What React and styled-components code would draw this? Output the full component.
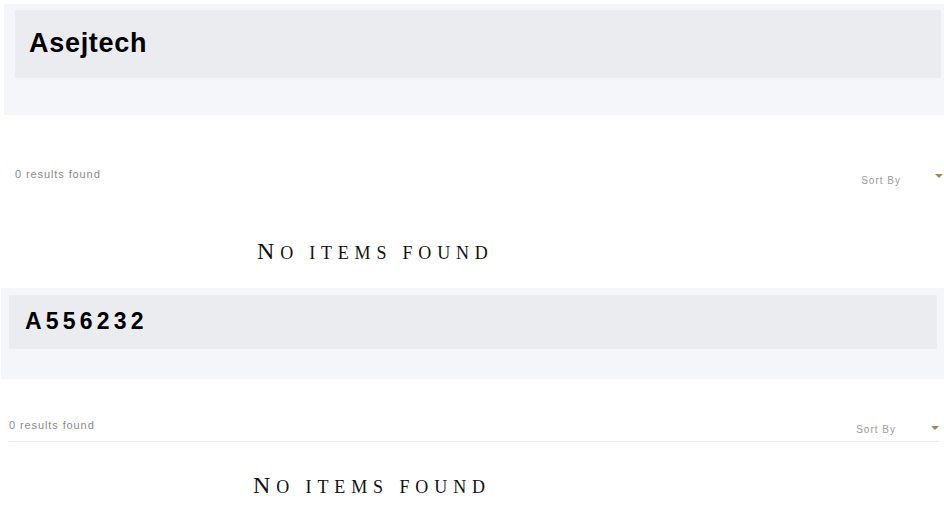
import React from "react";
import styled, { createGlobalStyle } from "styled-components";

const Global = createGlobalStyle`
  html, body { margin: 0; padding: 0; background: #ffffff; }
  body { font-family: "Liberation Sans", Arial, sans-serif; }
`;

const Page = styled.div`
  width: 944px;
  height: 524px;
  overflow: hidden;
  display: flex;
  flex-direction: column;
`;

const Section = styled.section`
  display: flex;
  flex-direction: column;
  padding-top: ${(p) => p.$top}px;
`;

const Banner = styled.div`
  margin-left: ${(p) => p.$left}px;
  background: #f5f6fa;
  height: ${(p) => p.$h}px;
  box-sizing: border-box;
  padding: ${(p) => p.$pad};
`;

const TitleBox = styled.div`
  background: #ebecf0;
  height: ${(p) => p.$h}px;
  display: flex;
  align-items: flex-start;
  padding-left: ${(p) => p.$indent}px;
  padding-top: ${(p) => p.$ptop}px;
  box-sizing: border-box;
`;

const Title = styled.h1`
  margin: 0;
  font-family: "Liberation Sans", Arial, sans-serif;
  font-weight: 700;
  font-size: ${(p) => p.$size}px;
  line-height: 1;
  letter-spacing: ${(p) => p.$ls}px;
  color: #000;
`;

const Toolbar = styled.div`
  display: flex;
  justify-content: space-between;
  margin: ${(p) => p.$margin};
  height: ${(p) => p.$h}px;
  border-bottom: 1px solid ${(p) => (p.$line ? "#ececec" : "transparent")};
`;

const Results = styled.span`
  font-family: "Liberation Sans", Arial, sans-serif;
  font-size: 11px;
  color: #8a8a8a;
  letter-spacing: 0.9px;
  padding-top: ${(p) => p.$top}px;
  line-height: 1;
`;

const Sort = styled.div`
  display: flex;
  align-items: flex-start;
  gap: ${(p) => p.$gap}px;
`;

const SortLabel = styled.span`
  font-family: "Liberation Sans", Arial, sans-serif;
  font-size: 10px;
  color: #9b9b9b;
  letter-spacing: 1px;
  padding-top: ${(p) => p.$top}px;
  line-height: 1;
`;

const Caret = styled.span`
  width: 0;
  height: 0;
  margin-top: ${(p) => p.$top}px;
  border-left: 4px solid transparent;
  border-right: 4px solid transparent;
  border-top: 4px solid #9c8a58;
`;

const Empty = styled.div`
  padding-left: ${(p) => p.$left}px;
  margin-top: ${(p) => p.$top}px;
  font-family: "Liberation Serif", "Times New Roman", serif;
  text-transform: uppercase;
  font-size: 18px;
  line-height: 24px;
  height: 24px;
  letter-spacing: ${(p) => p.$ls}px;
  color: #111;
  white-space: nowrap;

  &::first-letter {
    font-size: 24px;
  }
`;

const sections = [
  {
    title: "Asejtech",
    top: 4,
    bannerLeft: 4,
    bannerH: 111,
    bannerPad: "6px 3px 0 11px",
    boxH: 68,
    indent: 14,
    ptop: 20,
    titleSize: 27,
    titleLs: 0.7,
    toolbarMargin: "0 1px 0 15px",
    toolbarH: 100,
    resultsTop: 54,
    sortTop: 61,
    caretTop: 59,
    sortGap: 34,
    line: false,
    emptyLeft: 257,
    emptyTop: 23,
    emptyLs: 5.8,
  },
  {
    title: "A556232",
    top: 25,
    bannerLeft: 1,
    bannerH: 91,
    bannerPad: "7px 7px 0 8px",
    boxH: 54,
    indent: 16,
    ptop: 15,
    titleSize: 23,
    titleLs: 4.2,
    toolbarMargin: "0 5px 0 9px",
    toolbarH: 62,
    resultsTop: 41,
    sortTop: 46,
    caretTop: 47,
    sortGap: 35,
    line: true,
    emptyLeft: 253,
    emptyTop: 31,
    emptyLs: 5.9,
  },
];

export default function App() {
  return (
    <>
      <Global />
      <Page>
        {sections.map((s, i) => (
          <Section key={i} $top={s.top}>
            <Banner $left={s.bannerLeft} $h={s.bannerH} $pad={s.bannerPad}>
              <TitleBox $h={s.boxH} $indent={s.indent} $ptop={s.ptop}>
                <Title $size={s.titleSize} $ls={s.titleLs}>{s.title}</Title>
              </TitleBox>
            </Banner>
            <Toolbar $margin={s.toolbarMargin} $h={s.toolbarH} $line={s.line}>
              <Results $top={s.resultsTop}>0 results found</Results>
              <Sort $gap={s.sortGap}>
                <SortLabel $top={s.sortTop}>Sort By</SortLabel>
                <Caret $top={s.caretTop} />
              </Sort>
            </Toolbar>
            <Empty $left={s.emptyLeft} $top={s.emptyTop} $ls={s.emptyLs}>
              No items found
            </Empty>
          </Section>
        ))}
      </Page>
    </>
  );
}
